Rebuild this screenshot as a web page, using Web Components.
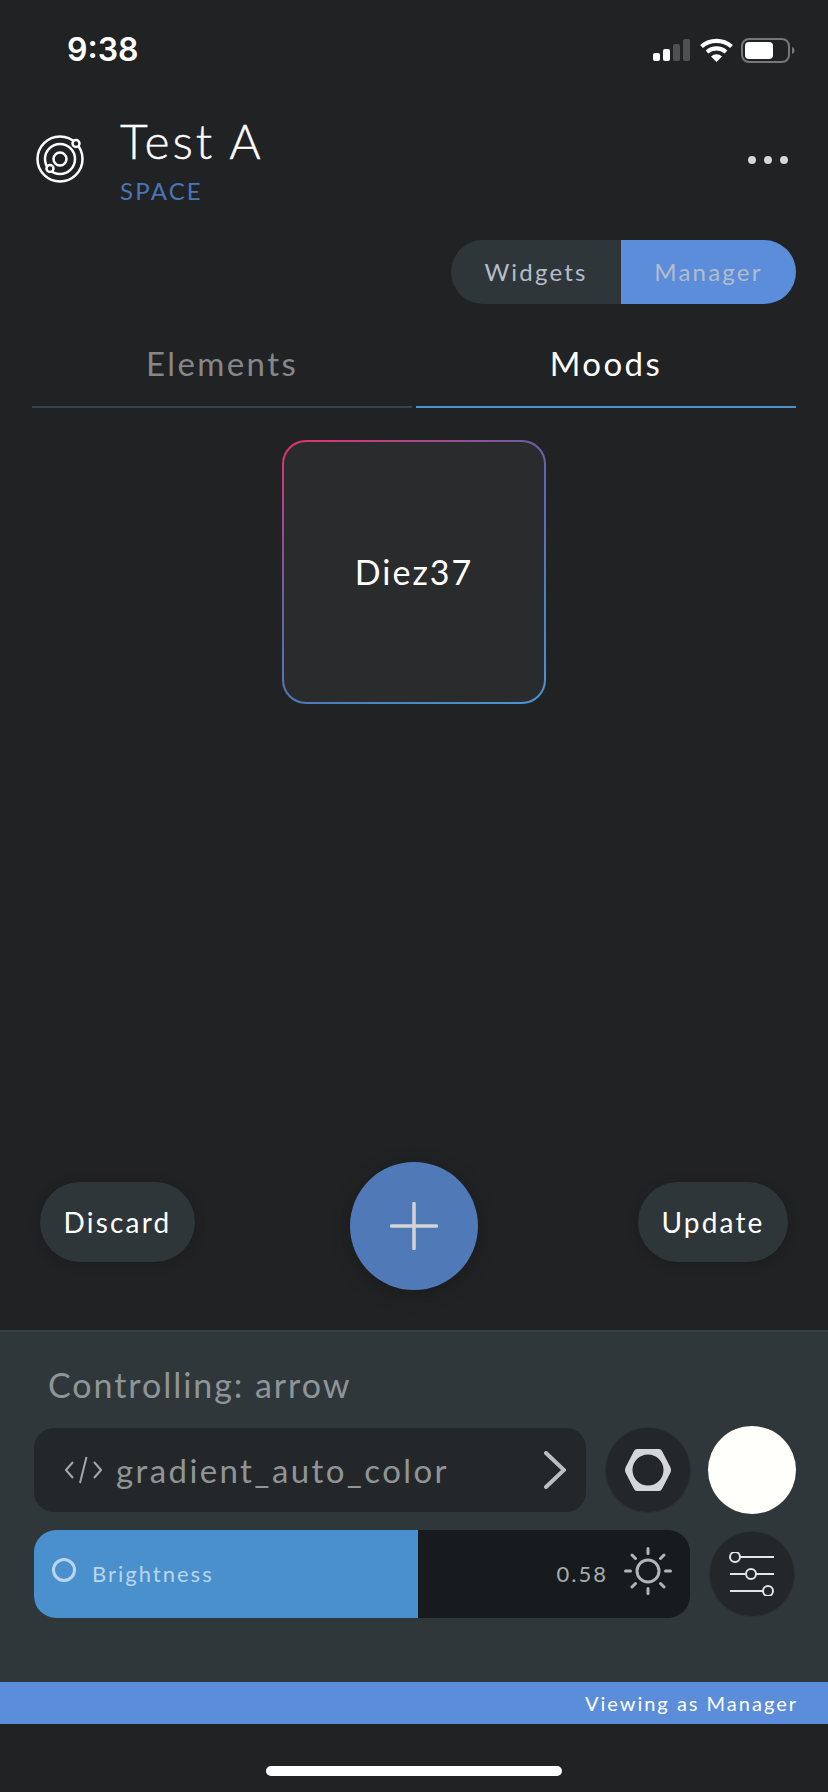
<!DOCTYPE html>
<html><head><meta charset="utf-8"><style>
html,body{margin:0;padding:0;background:#202224}
body{width:828px;height:1792px;overflow:hidden;font-family:Lato,"Liberation Sans",sans-serif;display:flex;flex-direction:column}
</style></head><body>
<status-bar></status-bar>
<space-header title="Test A" sub="SPACE"></space-header>
<view-toggle></view-toggle>
<tab-bar></tab-bar>
<mood-grid><mood-card>Diez37</mood-card></mood-grid>
<action-row></action-row>
<control-panel></control-panel>
<role-strip>Viewing as Manager</role-strip>
<home-bar></home-bar>
<script>
function def(name,html){customElements.define(name,class extends HTMLElement{constructor(){super();const r=this.attachShadow({mode:'open'});r.innerHTML=html;}})}
def('status-bar',`<style>:host{display:flex;height:86px;box-sizing:border-box;padding:0 33px 0 67px;align-items:center;justify-content:space-between;flex:none}
.t{font:600 32px/1 Inter,"Liberation Sans",sans-serif;color:#fff;position:relative;top:7px}
svg{display:block;position:relative;top:8px}</style>
<span class="t">9:38</span>
<svg width="143" height="26" viewBox="0 0 143 26"><g>
<rect x="1" y="15" width="7" height="8" rx="2" fill="#fff"/><rect x="11" y="11" width="7" height="12" rx="2" fill="#fff"/><rect x="21" y="6" width="7" height="17" rx="2" fill="#4f5051"/><rect x="31" y="1" width="7" height="22" rx="2" fill="#4f5051"/>
<g fill="none" stroke="#fff" stroke-width="4.2"><path d="M49.5 8.5a23 23 0 0 1 30 0"/><path d="M55 14a14.5 14.5 0 0 1 19 0"/></g><path d="M59 18.5a8 8 0 0 1 11 0l-5.500 5.500z" fill="#fff"/>
<rect x="90" y="1" width="47" height="23" rx="7" fill="none" stroke="#767778" stroke-width="2"/><rect x="93" y="4" width="28" height="17" rx="4" fill="#fff"/><path d="M140 9c2 .8 2.500 2 2.500 3.500S142 15.200 140 16z" fill="#767778"/>
</g></svg>`);
def('space-header',`<style>:host{display:flex;align-items:flex-start;height:154px;box-sizing:border-box;padding:0 40px 0 36px;flex:none}
.ic{margin-top:49px;flex:none}.tx{margin-left:36px;margin-top:26px}
.a{font:300 48px/58px Lato,sans-serif;color:#fff;letter-spacing:2.8px;-webkit-text-stroke:.4px #fff}
.b{font:400 24px/30px Lato,sans-serif;color:#4a76b8;letter-spacing:2.2px;margin-top:6px}
.d{margin-left:auto;margin-top:70px;display:flex;gap:8px}.d i{width:8px;height:8px;border-radius:50%;background:#d8d8d8}</style>
<svg class="ic" width="48" height="48" viewBox="0 0 48 48" fill="none" stroke="#fff" stroke-width="2.500"><circle cx="24" cy="24" r="22.500"/><circle cx="24" cy="24" r="15"/><circle cx="24" cy="24" r="6.500"/><circle cx="40" cy="8.500" r="3.500" fill="#202224"/><circle cx="14" cy="33.500" r="3.500" fill="#202224"/></svg>
<div class="tx"><div class="a">Test A</div><div class="b">SPACE</div></div>
<div class="d"><i></i><i></i><i></i></div>`);
def('view-toggle',`<style>:host{display:flex;justify-content:flex-end;padding:0 32px;flex:none}
.w{display:flex;height:64px;border-radius:32px;overflow:hidden;font:400 24px/64px Lato,sans-serif;letter-spacing:2.2px;color:#b4bccb}
.l{width:170px;background:#2f3639;text-align:center}.r{width:175px;background:#5b8ddb;text-align:center}</style>
<div class="w"><div class="l">Widgets</div><div class="r">Manager</div></div>`);
def('tab-bar',`<style>:host{display:flex;gap:4px;padding:0 32px;flex:none;height:106px;box-sizing:border-box}
.t{flex:1;display:flex;flex-direction:column;font:400 33px/1 Lato,sans-serif;letter-spacing:2.4px;text-align:center}
.t span{display:block;box-sizing:border-box;height:102px;padding-top:31px;line-height:56px}
.t i{display:block;height:2px}
.o{color:#858789}.o i{background:#2f4557}.m{color:#fff}.m i{background:#4a94d0}</style>
<div class="t o"><span>Elements</span><i></i></div><div class="t m"><span>Moods</span><i></i></div>`);
def('mood-grid',`<style>:host{display:flex;justify-content:center;padding-top:30px;flex:1 1 auto;min-height:0}</style><slot></slot>`);
def('mood-card',`<style>:host{display:flex;align-items:center;justify-content:center;width:264px;height:264px;box-sizing:border-box;border:2px solid transparent;border-radius:24px;
background:linear-gradient(#2a2b2d,#2a2b2d) padding-box,linear-gradient(150deg,#e8306c 0%,#6e5ea6 37%,#5078b8 63%,#4a96d4 100%) border-box;
font:400 34px/1 Lato,sans-serif;color:#fff;letter-spacing:2px}</style><slot></slot>`);
def('action-row',`<style>:host{display:grid;grid-template-columns:1fr 128px 1fr;align-items:start;height:168px;box-sizing:border-box;padding:0 40px;flex:none}
.p{height:80px;margin-top:20px;border-radius:40px;background:#2f3639;color:#fff;font:400 28px/80px Lato,sans-serif;letter-spacing:2.2px;text-align:center;box-shadow:0 2px 12px rgba(0,0,0,.18)}
.e{justify-self:end}
.f{width:128px;height:128px;border-radius:50%;background:#5079b8;box-shadow:0 4px 20px rgba(0,0,0,.22);display:flex;align-items:center;justify-content:center}</style>
<div class="p" style="width:155px">Discard</div>
<div class="f"><svg width="48" height="48" viewBox="0 0 48 48" stroke="#d3d3d3" stroke-linecap="round"><path d="M24 1.500v45M1.500 24h45" stroke-width="3.500"/></svg></div>
<div class="p e" style="width:150px">Update</div>`);
def('round-btn',`<style>:host{display:flex;align-items:center;justify-content:center;width:84px;height:84px;border-radius:50%;background:#232729;box-shadow:0 0 0 1px #2b3033;flex:none}</style><slot></slot>`);
def('bright-slider',`<style>:host{display:flex;flex:1;height:88px;border-radius:22px;overflow:hidden;background:#181b1d;font:400 22px/1 Lato,sans-serif;letter-spacing:2px}
.f{width:384px;background:#4a90cc;display:flex;align-items:center;flex:none;padding-left:18px;box-sizing:border-box}
.f b{width:24px;height:24px;box-sizing:border-box;border:3.500px solid #b8d6ee;border-radius:50%;margin-top:-8px}
.f span{color:#b8d6ee;margin-left:16px}
.r{flex:1;display:flex;align-items:center;justify-content:flex-end;padding-right:18px;color:#a9acae;gap:16px}.r svg{display:block;margin-top:-6px}</style>
<div class="f"><b></b><span>Brightness</span></div>
<div class="r"><span>0.58</span><svg width="48" height="48" viewBox="0 0 48 48" fill="none" stroke="#b3b4b5" stroke-width="3" stroke-linecap="round"><circle cx="24" cy="24" r="11"/><path d="M24 1.500v5M24 41.500v5M1.500 24h5M41.500 24h5M8 8l3.500 3.500M36.500 36.500L40 40M8 40l3.500-3.500M36.500 11.500L40 8"/></svg></div>`);
def('control-panel',`<style>:host{display:block;height:352px;box-sizing:border-box;background:#30373a;border-top:2px solid #3a4145;padding:0 32px 0 34px;flex:none}
.h{font:400 34px/34px Lato,sans-serif;color:#8f9597;letter-spacing:1.95px;margin-left:14px;padding-top:36px;height:94px;box-sizing:border-box}
.r1,.r2{display:flex;align-items:center}
.r1{height:88px}.r2{margin-top:16px;height:88px}
.box{width:552px;height:84px;box-sizing:border-box;background:#232729;border-radius:20px;display:flex;align-items:center;padding-left:31px;color:#8f9597;font:400 33px/1 Lato,sans-serif;letter-spacing:2.4px}
.box span{margin-left:14px}.box .c{margin-left:auto;margin-right:20px}
.w{width:88px;height:88px;border-radius:50%;background:#fffffb;margin-left:18px;flex:none}
.a{margin-left:20px}.b{margin:0 2px 0 20px}</style>
<div class="h">Controlling: arrow</div>
<div class="r1"><div class="box"><svg width="37" height="28" viewBox="0 0 37 28" fill="none" stroke="#a4a7a9" stroke-width="2"><path d="M8 6L1 14l7 8M29 6l7 8-7 8M21.500 1L15 27"/></svg><span>gradient_auto_color</span>
<svg class="c" width="22" height="38" viewBox="0 0 22 38" fill="none" stroke="#bdbebf" stroke-width="4" stroke-linecap="round"><path d="M2 2l18 17L2 36"/></svg></div>
<round-btn class="a"><svg width="46" height="42" viewBox="0 0 46 42"><path fill="#d5d6d9" fill-rule="evenodd" d="M12 0h22q2 0 3 2l8.500 16.500q1 2.500 0 5L37 40q-1 2-3 2H12q-2 0-3-2L.5 23.500q-1-2.500 0-5L9 2q1-2 3-2zM23 5.500a15.500 15.500 0 1 0 0 31a15.500 15.500 0 0 0 0-31z"/></svg></round-btn>
<div class="w"></div></div>
<div class="r2"><bright-slider></bright-slider>
<round-btn class="b"><svg width="46" height="44" viewBox="0 0 46 44" fill="none" stroke="#e4e5e5" stroke-width="2"><path d="M11 5h34M1 22h15M27 22h18M1 39h34"/><circle cx="6" cy="5" r="5"/><circle cx="22" cy="22" r="5"/><circle cx="39" cy="39" r="5"/></svg></round-btn></div>`);
def('role-strip',`<style>:host{display:block;height:42px;background:#5b8ddb;color:#fff;font:400 20px/42px Lato,sans-serif;letter-spacing:2px;text-align:right;padding-right:30px;flex:none}</style><slot></slot>`);
def('home-bar',`<style>:host{display:flex;justify-content:center;height:68px;padding-top:42px;box-sizing:border-box;flex:none}i{display:block;width:296px;height:10px;border-radius:5px;background:#fff}</style><i></i>`);
</script>
</body></html>
